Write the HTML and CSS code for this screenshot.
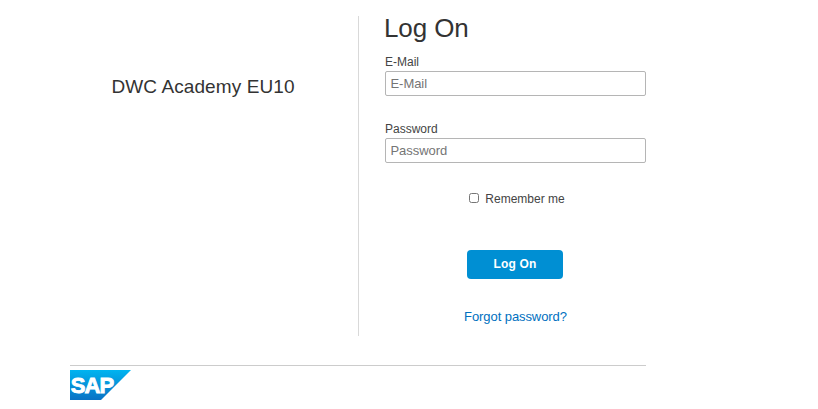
FILE: index.html
```html
<!DOCTYPE html>
<html lang="en">
<head>
<meta charset="utf-8">
<title>Log On</title>
<link rel="stylesheet" href="styles.css">
</head>
<body>
<div class="page">
  <main class="content">
    <section class="tenant"><h2 class="tenant-name">DWC Academy EU10</h2></section>
    <form class="logon">
      <h1 class="title">Log On</h1>
      <label class="label" for="email">E-Mail</label>
      <input class="field" id="email" type="text" placeholder="E-Mail">
      <label class="label label-password" for="password">Password</label>
      <input class="field" id="password" type="password" placeholder="Password">
      <label class="remember"><input class="check" type="checkbox"><span>Remember me</span></label>
      <button class="submit" type="button">Log On</button>
      <a class="forgot" href="#">Forgot password?</a>
    </form>
  </main>
  <footer class="footer">
    <svg class="logo" viewBox="0 0 61 30" role="img" aria-label="SAP">
      <defs><linearGradient id="blue" x1="0" y1="0" x2="0" y2="1"><stop offset="0" stop-color="#00b4f0"/><stop offset="1" stop-color="#0a72c4"/></linearGradient></defs>
      <path fill="url(#blue)" d="M0 0H61L31 30H0Z"/>
      <text class="logo-text" x="0.7" y="22.7">SAP</text>
    </svg>
  </footer>
</div>
</body>
</html>
```
FILE: styles.css
```css
* { box-sizing: border-box; }
body { margin: 0; background: #fff; color: #333; font-family: "Liberation Sans", Arial, sans-serif; }
.page { width: 576px; margin: 0 0 0 70px; padding-top: 16px; }
.content { display: flex; height: 320px; }
.tenant { width: 289px; padding: 59px 22px 0 0; border-right: 1px solid #d9d9d9; text-align: center; }
.tenant-name { margin: 0; font-size: 19px; line-height: 23px; font-weight: 400; letter-spacing: .1px; }
.logon { display: flex; flex-direction: column; width: 287px; padding-left: 26px; }
.title { margin: 0 0 14px -1px; font-size: 26px; line-height: 24px; font-weight: 400; letter-spacing: -.1px; }
.label { height: 17px; color: #444; font-size: 12px; line-height: 16px; }
.label-password { margin-top: 25px; }
.field { width: 261px; height: 25px; padding: 0 4.5px; border: 1px solid #b5b5b5; border-radius: 2px; font: 13px "Liberation Sans", Arial, sans-serif; }
.field::placeholder { color: #757575; letter-spacing: -.05px; }
.remember { display: flex; align-items: center; align-self: center; height: 16px; margin: 27px 1px 0 0; color: #444; font-size: 12px; }
.remember span { padding-top: 1px; }
.check { width: 10px; height: 10px; margin: 0 6px 0 4px; }
.submit { align-self: center; width: 96px; height: 29px; margin: 44px 1px 0 0; padding: 0 0 1px; border: 0; border-radius: 4px; background: #008fd3; color: #fff; font: bold 12px "Liberation Sans", Arial, sans-serif; letter-spacing: .2px; }
.forgot { align-self: center; margin-top: 29px; color: #0070c0; font-size: 13px; line-height: 18px; letter-spacing: -.08px; text-decoration: none; }
.footer { margin-top: 29px; padding-top: 4px; border-top: 1px solid #ccc; }
.logo { display: block; width: 61px; height: 30px; }
.logo-text { fill: #fff; stroke: #fff; stroke-width: .9px; font: bold 22px "Liberation Sans", Arial, sans-serif; letter-spacing: -.9px; }
```
